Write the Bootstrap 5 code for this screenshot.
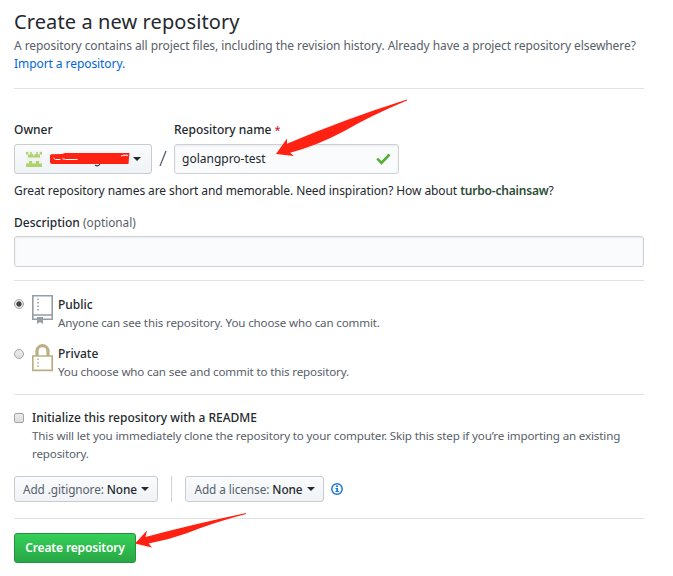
<!DOCTYPE html>
<html lang="en">
<head>
<meta charset="utf-8">
<title>Create a new repository</title>
<meta name="viewport" content="width=device-width, initial-scale=1">
<link href="https://cdn.jsdelivr.net/npm/bootstrap@5.3.0/dist/css/bootstrap.min.css" rel="stylesheet">
<style>
body{font-family:"Noto Sans","Open Sans",sans-serif;font-size:12px;line-height:18px;color:#24292e;background:#fff;overflow:hidden}
.page{width:630px;margin-left:14px;padding-top:6px}
h1{font-size:20px;line-height:31px;font-weight:400;letter-spacing:.1px}
.muted{color:#586069}
.intro{letter-spacing:-.07px}
.hint{letter-spacing:-.09px;padding-top:8px}
.note{font-size:11.6px;letter-spacing:-.15px;padding-bottom:1px}
.t-link{color:#0366d6}
.rule{height:1px;background:#dfe2e5}
.semi{font-weight:500}
.under{margin-top:5px}
.field{border:1px solid #cdd1d6;border-radius:3px;background:#fafbfc;box-shadow:inset 0 1px 2px rgba(27,31,35,.075);color:#24292e;font-size:12px;line-height:18px;padding:5px 7px}
.b-grey{border:1px solid #c8cbcf;border-radius:3px;background:linear-gradient(#fafbfc,#eff3f6);font-size:12px;line-height:18px;color:#24292e;padding:0}
.b-owner{width:138px;height:30px;padding-left:7px}
.b-owner .caret{margin-left:3px}
.b-small{height:26px;font-size:11.8px;letter-spacing:-.08px}
.b-green{width:122px;height:30px;border:1px solid #28903f;border-radius:3px;background:linear-gradient(#34d058,#28a745);color:#fff;font-size:12px;letter-spacing:-.15px;font-weight:600;padding:0;line-height:18px}
.caret{width:0;height:0;margin-left:4px;border:4px solid transparent;border-top-color:#24292e;border-bottom:0}
.slash{width:22px;padding:0 7px 6px}
.repo-field{width:225px;height:30px}
.desc-field{height:31px;width:100%}
.pick{appearance:none;flex:none;width:10px;height:10px;margin:4px 0 0;border:1px solid #a5a5a5;background:linear-gradient(#ececec,#dcdcdc)}
.pick[type=radio]{border-radius:50%}
.pick[type=radio]:checked{background:radial-gradient(circle,#444 0 2.3px,#e8e8e8 3px)}
.pick[type=checkbox]{border-radius:2px}
.suggest{color:#2c4e36;font-weight:600;letter-spacing:-.2px}
.star{color:#cb2431;font-size:11px}
.opt{font-size:11.8px}
.lift{margin-top:-1px}
.sep{width:1px;height:26px;background:#cfd3d7;margin:0 13px}
.w-git{width:144px}
.w-lic{width:139px}
.arrows{position:absolute;left:0;top:0;pointer-events:none}
</style>
</head>
<body>
<main class="page">
  <h1 class="m-0">Create a new repository</h1>
  <p class="m-0 muted text-nowrap intro">A repository contains all project files, including the revision history. Already have a project repository elsewhere?<br><a class="t-link text-decoration-none" href="#">Import a repository.</a></p>
  <div class="rule" style="margin-top:15px"></div>

  <form>
    <div class="d-flex" style="padding-top:32px">
      <div><label class="d-block semi">Owner</label>
        <button type="button" class="btn b-grey b-owner d-flex align-items-center under">
          <svg class="ms-1" width="16" height="16" viewBox="0 0 16 16"><path fill="#f2f2f0" d="M0 0h16v16H0z"/><path fill="#add36f" d="M0 1h2.200v2.500h2V1h1.500v2h1.500v1.500h1.600V3h1.500V1h1.500v2.500h2V1H16v2.500h-2v3H2v-3H0zM3 10h3.200v2.500h3.600V10H13v2.500h3V16H0v-3.500h3z"/></svg>
          <svg class="ms-2" width="80" height="18" viewBox="0 0 80 18"><path stroke="#3a3f44" stroke-width="1.300" fill="none" d="M45 15q3 2 5-1"/><path fill="#ff2213" d="M0 5.500L1 4.300 12 4l3-1h64.500L79 7l-.5 7H2q-2 0-2-2z"/><path stroke="#fff" stroke-width="1" fill="none" d="M3.500 8l2 1.500h5m2-.7l3 .7h12M71 6.300l2-1h5"/></svg>
          <i class="caret"></i>
        </button></div>
      <div class="slash align-self-end"><svg class="d-block" width="8" height="18" viewBox="0 0 8 18"><path d="M7 1L1 16" stroke="#586069" stroke-width="1.300"/></svg></div>
      <div><label class="d-block semi">Repository name <span class="star">*</span></label>
        <div class="field repo-field d-flex align-items-center justify-content-between under"><span>golangpro-test</span>
          <svg width="15" height="12" viewBox="0 0 15 12"><path d="M1.200 5.700l4.300 4.300 8-8.500" fill="none" stroke="#55ae35" stroke-width="2.600"/></svg></div></div>
    </div>
    <p class="m-0 text-nowrap hint">Great repository names are short and memorable. Need inspiration? How about <span class="suggest">turbo-chainsaw</span>?</p>
    <label class="d-block semi" for="d" style="padding-top:13px">Description <span class="muted fw-normal opt">(optional)</span></label>
    <input id="d" class="field desc-field d-block mt-1">
    <div class="rule" style="margin-top:13px"></div>

    <div class="d-flex" style="padding-top:15px"><input class="pick lift" style="margin-top:3px" type="radio" name="v" checked>
      <svg class="ms-2 flex-shrink-0 lift" width="22" height="30" viewBox="0 0 22 30"><path fill="none" stroke="#959da5" stroke-width="1.600" d="M5 24.200H.8V.8h19.400v23.400H11M.8 20h19.400"/><path stroke="#959da5" stroke-width="1.500" stroke-dasharray="1.500 2" d="M6 3.500v13"/><path fill="#959da5" d="M5 22h6v7l-3-2-3 2z"/></svg>
      <div class="ms-1"><div class="semi">Public</div><div class="muted note">Anyone can see this repository. You choose who can commit.</div></div></div>
    <div class="d-flex" style="padding-top:12px"><input class="pick" type="radio" name="v">
      <svg class="ms-2 flex-shrink-0 lift" width="22" height="28" viewBox="0 0 22 28"><path fill="none" stroke="#bcae84" stroke-width="1.700" d="M.8 12h19.400v14.300H.8z"/><path fill="none" stroke="#bcae84" stroke-width="3.200" d="M5 12V7.200a5.500 5.500 0 0 1 11 0V12"/><path stroke="#bcae84" stroke-width="1.500" stroke-dasharray="1.500 2" d="M6 14.500v10"/></svg>
      <div class="ms-1"><div class="semi">Private</div><div class="muted note">You choose who can see and commit to this repository.</div></div></div>
    <div class="rule" style="margin-top:12px"></div>

    <div class="d-flex" style="padding-top:14px"><input class="pick" type="checkbox">
      <div class="ms-2"><div class="semi">Initialize this repository with a README</div><div class="muted note text-nowrap">This will let you immediately clone the repository to your computer. Skip this step if you’re importing an existing<br>repository.</div></div></div>
    <div class="d-flex align-items-center" style="padding-top:12px">
      <button type="button" class="btn b-grey b-small w-git d-flex align-items-center justify-content-center"><span><span class="muted">Add .gitignore:</span> <span class="semi">None</span></span><i class="caret"></i></button>
      <div class="sep"></div>
      <button type="button" class="btn b-grey b-small w-lic d-flex align-items-center justify-content-center"><span><span class="muted">Add a license:</span> <span class="semi">None</span></span><i class="caret"></i></button>
      <svg width="12" height="12" viewBox="0 0 12 12" style="margin-left:7px"><circle cx="6" cy="6" r="5.200" fill="none" stroke="#1b75da" stroke-width="1.500"/><path fill="#1b75da" d="M5 2.500h2V4H5zM4.500 5H7v3h.8v1H4.500V8h.8V6h-.8z"/></svg>
    </div>
    <div class="rule" style="margin:16px 0 14px"></div>
    <button type="button" class="btn b-green">Create repository</button>
  </form>
</main>
<svg class="arrows" width="673" height="576" viewBox="0 0 673 576"><path fill="#ff2213" d="M407 99.500Q345 119 287 143.800V138.500L276 154l17.800 2-3.600-3.200Q318 145 343 131.700 372 115 407 100.500zM246 513Q190 525 145.500 537l1.500-6.500L135 543.500l17 4-3.300-4Q168 540 186 533.500 215 522 246 514z"/></svg>
<script src="https://cdn.jsdelivr.net/npm/bootstrap@5.3.0/dist/js/bootstrap.bundle.min.js"></script>
</body>
</html>
